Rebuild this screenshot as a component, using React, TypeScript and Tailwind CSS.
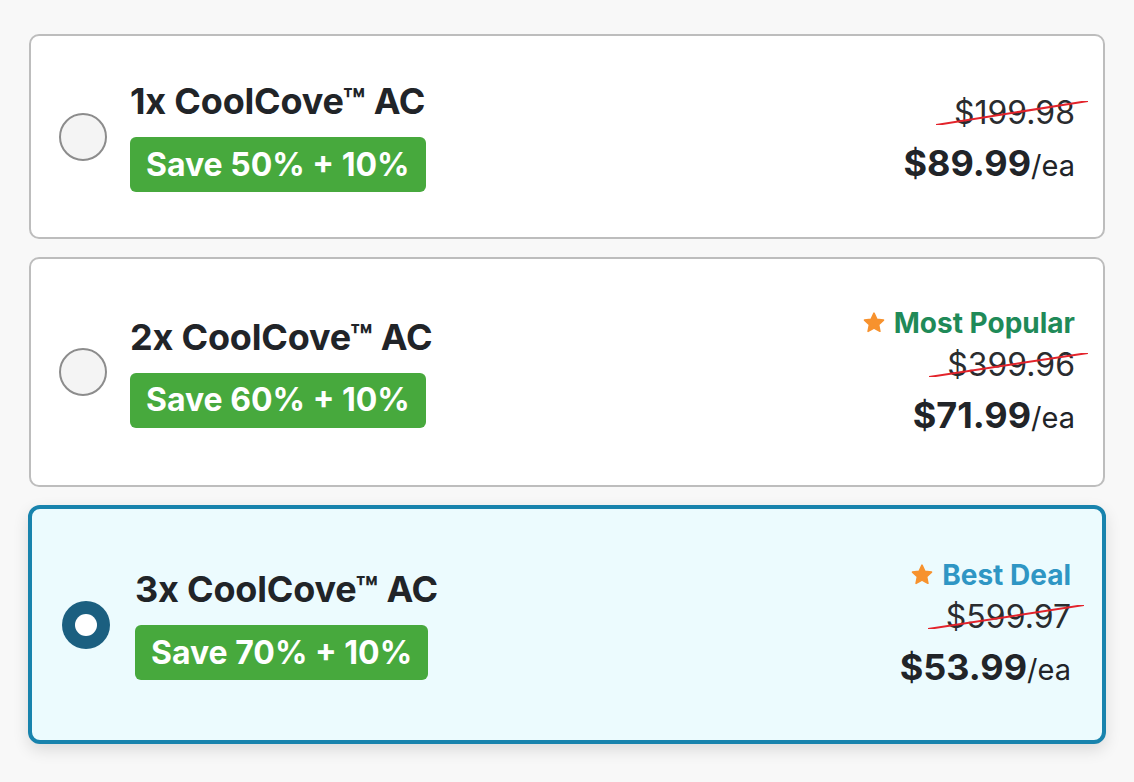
import React from "react";

type Deal = {
  qty: number;
  save: string;
  was: string;
  price: string;
  tag?: { label: string; color: string };
  selected?: boolean;
};

const deals: Deal[] = [
  { qty: 1, save: "Save 50% + 10%", was: "$199.98", price: "$89.99" },
  {
    qty: 2,
    save: "Save 60% + 10%",
    was: "$399.96",
    price: "$71.99",
    tag: { label: "Most Popular", color: "text-[#1f8a58]" },
  },
  {
    qty: 3,
    save: "Save 70% + 10%",
    was: "$599.97",
    price: "$53.99",
    tag: { label: "Best Deal", color: "text-[#2f96c4]" },
    selected: true,
  },
];

function Star() {
  return (
    <svg width="24" height="24" viewBox="0 0 24 24" className="mr-[8px]">
      <path
        d="M12 2.2l2.9 6.1 6.6.8-4.9 4.6 1.3 6.6L12 17.1l-5.9 3.2 1.3-6.6-4.9-4.6 6.6-.8z"
        fill="#f7922e"
        stroke="#f7922e"
        strokeWidth="1.6"
        strokeLinejoin="round"
      />
    </svg>
  );
}

function Radio({ on }: { on?: boolean }) {
  if (on) {
    return (
      <div className="w-[48px] h-[48px] rounded-full bg-[#1b5f80] flex items-center justify-center shrink-0">
        <div className="w-[22px] h-[22px] rounded-full bg-white" />
      </div>
    );
  }
  return (
    <div className="w-[48px] h-[48px] rounded-full border-2 border-[#8c8c8c] bg-[#f4f4f4] shrink-0" />
  );
}

function DealCard({ deal }: { deal: Deal }) {
  const on = deal.selected;
  const height = deal.qty === 1 ? "h-[205px]" : deal.qty === 2 ? "h-[230px]" : "h-[239px]";
  return (
    <div
      className={
        on
          ? `${height} flex items-center rounded-[12px] border-4 border-[#1883ad] bg-[#ecfbfe] pl-[30px] pr-[31px] shadow-[0_6px_16px_rgba(0,0,0,0.12)] mx-[-1px]`
          : `${height} flex items-center rounded-[10px] border-2 border-[#bdbdbd] bg-white pl-[28px] pr-[28px]`
      }
    >
      <Radio on={on} />
      <div className={on ? "ml-[25px] flex-1" : "ml-[23px] flex-1"}>
        <div className="text-[36px] leading-[40px] font-bold text-[#212428] tracking-[-0.2px]">
          {deal.qty}x CoolCove™ AC
        </div>
        <div className="mt-[16px] inline-flex h-[55px] items-center rounded-[6px] bg-[#47a93d] px-[16px] text-[32px] font-bold text-white">
          {deal.save}
        </div>
      </div>
      <div className="flex flex-col items-end text-[#212428]">
        {deal.tag && (
          <div className={`flex items-center text-[28px] leading-[32px] font-bold ${deal.tag.color}`}>
            <Star />
            {deal.tag.label}
          </div>
        )}
        <div className="mt-[8px] relative text-[32px] leading-[36px] text-[#2a2c2f]">
          {deal.was}
          <svg
            className="absolute left-[-18px] top-[6px] w-[calc(100%+31px)] h-[24px]"
            viewBox="0 0 100 10"
            preserveAspectRatio="none"
          >
            <line x1="0" y1="10" x2="100" y2="0" stroke="#e3232b" strokeWidth="2" vectorEffect="non-scaling-stroke" />
          </svg>
        </div>
        <div className="mt-[12px] flex items-baseline leading-[40px]">
          <span className="text-[36px] font-bold">{deal.price}</span>
          <span className="text-[29px]">/ea</span>
        </div>
      </div>
    </div>
  );
}

export default function App() {
  return (
    <div
      className="min-h-[782px] w-[1134px] bg-[#f8f8f8] pt-[34px] px-[29px]"
      style={{ fontFamily: "Inter, 'Noto Sans', sans-serif" }}
    >
      <div className="flex flex-col gap-[18px]">
        {deals.map((d) => (
          <DealCard key={d.qty} deal={d} />
        ))}
      </div>
    </div>
  );
}
